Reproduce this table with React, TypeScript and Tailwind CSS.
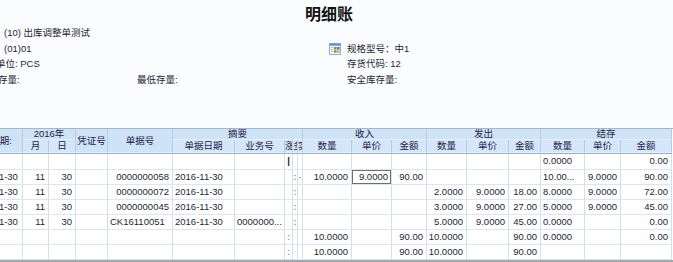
import React from "react";

const COLS =
  "grid-cols-[55px_26px_27px_32px_65px_62px_50px_8px_5px_5px_49px_40px_35px_40px_42px_32px_44px_36px_51px]";

type Cell = { t?: string; a?: "l" | "r" | "c"; sel?: boolean; mark?: boolean; dark?: boolean };

const rows: Cell[][] = [
  // 1
  [
    {}, {}, {}, {}, {}, {}, {}, { t: "|", a: "c", dark: true }, {}, {},
    {}, {}, {}, {}, {}, {}, { t: "0.0000", a: "l" }, {}, { t: "0.00", a: "r" },
  ],
  // 2
  [
    { t: "2016-11-30", a: "l" }, { t: "11", a: "r" }, { t: "30", a: "r" }, {},
    { t: "0000000058", a: "r" }, { t: "2016-11-30", a: "l" }, {}, {}, { t: ":", a: "c", mark: true }, { t: "·", a: "c" },
    { t: "10.0000", a: "r" }, { t: "9.0000", a: "r", sel: true }, { t: "90.00", a: "r" },
    {}, {}, {},
    { t: "10.00...", a: "l" }, { t: "9.0000", a: "r" }, { t: "90.00", a: "r" },
  ],
  // 3
  [
    { t: "2016-11-30", a: "l" }, { t: "11", a: "r" }, { t: "30", a: "r" }, {},
    { t: "0000000072", a: "r" }, { t: "2016-11-30", a: "l" }, {}, {}, { t: ":", a: "c", mark: true }, {},
    {}, {}, {},
    { t: "2.0000", a: "r" }, { t: "9.0000", a: "r" }, { t: "18.00", a: "r" },
    { t: "8.0000", a: "l" }, { t: "9.0000", a: "r" }, { t: "72.00", a: "r" },
  ],
  // 4
  [
    { t: "2016-11-30", a: "l" }, { t: "11", a: "r" }, { t: "30", a: "r" }, {},
    { t: "0000000045", a: "r" }, { t: "2016-11-30", a: "l" }, {}, {}, { t: ":", a: "c", mark: true }, {},
    {}, {}, {},
    { t: "3.0000", a: "r" }, { t: "9.0000", a: "r" }, { t: "27.00", a: "r" },
    { t: "5.0000", a: "l" }, { t: "9.0000", a: "r" }, { t: "45.00", a: "r" },
  ],
  // 5
  [
    { t: "2016-11-30", a: "l" }, { t: "11", a: "r" }, { t: "30", a: "r" }, {},
    { t: "CK16110051", a: "l" }, { t: "2016-11-30", a: "l" }, { t: "0000000...", a: "l" }, {}, { t: ":", a: "c", mark: true }, {},
    {}, {}, {},
    { t: "5.0000", a: "r" }, { t: "9.0000", a: "r" }, { t: "45.00", a: "r" },
    { t: "0.0000", a: "l" }, {}, { t: "0.00", a: "r" },
  ],
  // 6
  [
    {}, {}, {}, {}, {}, {}, {}, { t: ":", a: "c", mark: true }, {}, {},
    { t: "10.0000", a: "r" }, {}, { t: "90.00", a: "r" },
    { t: "10.0000", a: "r" }, {}, { t: "90.00", a: "r" },
    { t: "0.0000", a: "l" }, {}, { t: "0.00", a: "r" },
  ],
  // 7
  [
    {}, {}, {}, {}, {}, {}, {}, { t: ":", a: "c", mark: true }, {}, {},
    { t: "10.0000", a: "r" }, {}, { t: "90.00", a: "r" },
    { t: "10.0000", a: "r" }, {}, { t: "90.00", a: "r" },
    {}, {}, {},
  ],
];

function WinIcon() {
  return (
    <svg width="12" height="12" viewBox="0 0 12 12" className="shrink-0">
      <rect x="0.5" y="0.5" width="11" height="11" fill="#f3f7fc" stroke="#8fb2dc" />
      <rect x="0.5" y="0.5" width="11" height="2.2" fill="#5d91d4" />
      <rect x="2" y="4" width="2" height="1" fill="#9fbde3" />
      <rect x="2" y="6" width="2" height="1" fill="#9fbde3" />
      <rect x="2" y="8" width="2" height="1" fill="#9fbde3" />
      <rect x="5" y="4" width="2.6" height="2.6" fill="#ee6a3c" />
      <rect x="8" y="4" width="2.6" height="2.6" fill="#3f8ae2" />
      <rect x="5" y="7.2" width="2.6" height="2.6" fill="#55b24c" />
      <rect x="8" y="7.2" width="2.6" height="2.6" fill="#f2a534" />
    </svg>
  );
}

function Hd({ children, cls = "" }: { children?: React.ReactNode; cls?: string }) {
  return (
    <div
      className={`flex items-center justify-center overflow-hidden whitespace-nowrap border-r border-b border-r-[#b7cde4] border-b-[#e6f0fa] text-[#1f2147] ${cls}`}
    >
      {children}
    </div>
  );
}

export default function App() {
  return (
    <div className="w-[673px] h-[262px] overflow-hidden bg-[#fbfcfe] text-[9.5px] text-[#1e1f33] font-['Liberation_Sans','Noto_Sans_CJK_SC',sans-serif]">
      {/* top area */}
      <div className="h-[128px] flex flex-col">
        <div className="h-[25px] flex justify-center pr-[15px] pt-[5px]">
          <span className="text-[16px] leading-[16px] font-bold text-[#111] font-['Noto_Sans_CJK_SC',sans-serif]">
            明细账
          </span>
        </div>
        <div className="h-[16px] flex items-center whitespace-nowrap">
          <span className="pl-[4px]">(10) 出库调整单测试</span>
        </div>
        <div className="h-[16px] flex items-center whitespace-nowrap">
          <div className="w-[329px] shrink-0 pl-[4px]">(01)01</div>
          <WinIcon />
          <span className="pl-[6px]">规格型号：中1</span>
        </div>
        <div className="h-[15px] flex items-center whitespace-nowrap">
          <div className="w-[347px] shrink-0 ml-[-4px] pl-0">单位: PCS</div>
          <span className="ml-[4px]">存货代码: 12</span>
        </div>
        <div className="h-[16px] flex items-center whitespace-nowrap">
          <div className="w-[158px] shrink-0 ml-[-21px]">最高存量:</div>
          <div className="w-[210px] shrink-0">最低存量:</div>
          <span>安全库存量:</span>
        </div>
      </div>

      {/* table */}
      <div className="w-[673px] h-[134px] overflow-hidden border-t border-t-[#a9b5c1] bg-[#fbfcfe]">
        <div className="w-[672px] border-r border-r-[#8a8f96]">
          <div className="ml-[-32px] w-[704px]">
            {/* header */}
            <div className={`grid ${COLS} grid-rows-[11px_13px] bg-[#cfe3f8] leading-[10px] border-b border-b-[#9fb1c4]`}>
              <Hd cls="row-span-2 !justify-end pr-[10px]">日期:</Hd>
              <Hd cls="col-span-2">2016年</Hd>
              <Hd cls="row-span-2">凭证号</Hd>
              <Hd cls="row-span-2">单据号</Hd>
              <Hd cls="col-span-5">摘要</Hd>
              <Hd cls="col-span-3">收入</Hd>
              <Hd cls="col-span-3">发出</Hd>
              <Hd cls="col-span-3">结存</Hd>
              <Hd cls="bg-[#d4e7fa]">月</Hd>
              <Hd cls="bg-[#d4e7fa]">日</Hd>
              <Hd cls="bg-[#d4e7fa]">单据日期</Hd>
              <Hd cls="bg-[#d4e7fa]">业务号</Hd>
              <Hd cls="bg-[#d4e7fa] !justify-start">涨</Hd>
              <Hd cls="bg-[#d4e7fa] !justify-start">多</Hd>
              <Hd cls="bg-[#d4e7fa] !justify-start">实</Hd>
              <Hd cls="bg-[#d4e7fa]">数量</Hd>
              <Hd cls="bg-[#d4e7fa]">单价</Hd>
              <Hd cls="bg-[#d4e7fa]">金额</Hd>
              <Hd cls="bg-[#d4e7fa]">数量</Hd>
              <Hd cls="bg-[#d4e7fa]">单价</Hd>
              <Hd cls="bg-[#d4e7fa]">金额</Hd>
              <Hd cls="bg-[#d4e7fa]">数量</Hd>
              <Hd cls="bg-[#d4e7fa]">单价</Hd>
              <Hd cls="bg-[#d4e7fa]">金额</Hd>
            </div>
            {/* body */}
            <div className={`grid ${COLS} grid-rows-[16px_15px_15px_15px_15px_15px_15px] bg-white`}>
              {rows.map((r, ri) =>
                r.map((c, ci) => (
                  <div
                    key={`${ri}-${ci}`}
                    className={`flex items-center overflow-hidden whitespace-nowrap border-r border-b border-r-[#d2e1ef] border-b-[#dde6ef] ${
                      c.a === "r" ? "justify-end pr-[3px]" : c.a === "c" ? "justify-center" : "justify-start pl-[2px]"
                    } ${c.sel ? "shadow-[inset_0_0_0_1px_#6f6f6f]" : ""} ${
                      c.mark ? "text-[#b49a3c] font-bold" : c.dark ? "text-[#222] font-bold" : ""
                    }`}
                  >
                    {c.t}
                  </div>
                ))
              )}
            </div>
          </div>
        </div>
        <div className="h-[3px] bg-[#a3a6aa]" />
      </div>
    </div>
  );
}
